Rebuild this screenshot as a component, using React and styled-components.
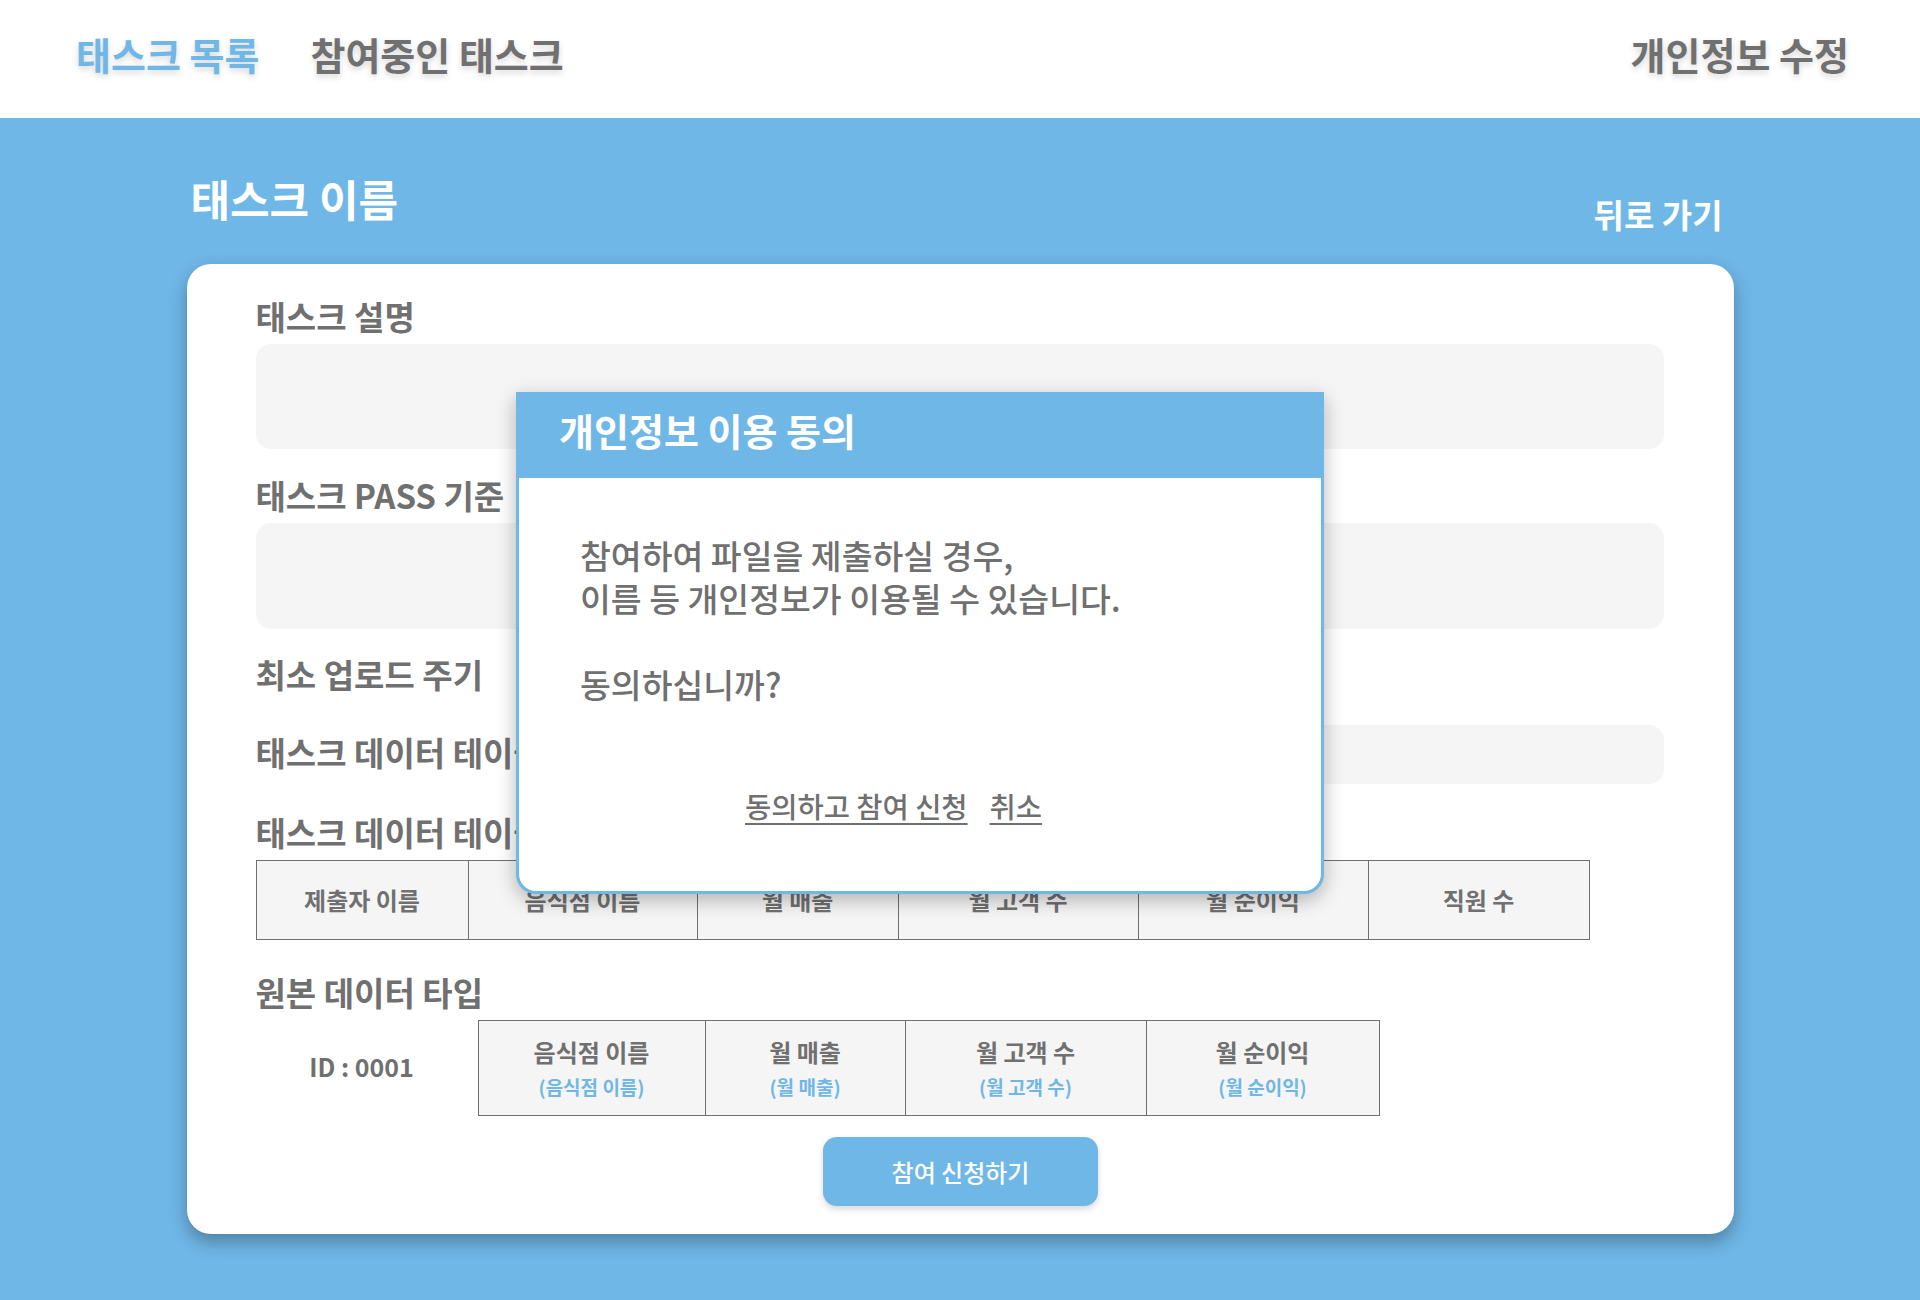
import styled, { createGlobalStyle } from 'styled-components'

const BLUE = '#6fb7e7'
const GREY = '#707070'

const GlobalStyle = createGlobalStyle`
  html, body {
    margin: 0;
    padding: 0;
    background: ${BLUE};
    font-family: 'Noto Sans CJK KR', 'Noto Sans', sans-serif;
    color: ${GREY};
  }
  * {
    box-sizing: border-box;
  }
`

const sourceColumns = [
  { name: '음식점 이름', width: 227 },
  { name: '월 매출', width: 200 },
  { name: '월 고객 수', width: 241 },
  { name: '월 순이익', width: 233 },
]

const dataColumns = [
  { name: '제출자 이름', width: 212 },
  { name: '음식점 이름', width: 229 },
  { name: '월 매출', width: 201 },
  { name: '월 고객 수', width: 240 },
  { name: '월 순이익', width: 230 },
  { name: '직원 수', width: 221 },
]

const sum = (cols) => cols.reduce((acc, col) => acc + col.width, 0)

const App = () => {
  return (
    <Page>
      <GlobalStyle />
      <Header>
        <Nav>
          <NavItem active>태스크 목록</NavItem>
          <NavItem>참여중인 태스크</NavItem>
        </Nav>
        <NavItem>개인정보 수정</NavItem>
      </Header>

      <Main>
        <TitleRow>
          <Title>태스크 이름</Title>
          <Back>뒤로 가기</Back>
        </TitleRow>

        <Card>
          <Label>태스크 설명</Label>
          <Field height={105} />

          <Label gap={26}>태스크 PASS 기준</Label>
          <Field height={106} />

          <Label gap={25}>최소 업로드 주기</Label>

          <FieldRow>
            <RowLabel>태스크 데이터 테이블 이름</RowLabel>
            <Field height={59} grow />
          </FieldRow>

          <Label gap={28}>태스크 데이터 테이블 형식</Label>
          <Table width={sum(dataColumns)}>
            <colgroup>
              {dataColumns.map((col) => (
                <col key={col.name} style={{ width: col.width }} />
              ))}
            </colgroup>
            <tbody>
              <tr>
                {dataColumns.map((col) => (
                  <Cell key={col.name} height={79}>
                    {col.name}
                  </Cell>
                ))}
              </tr>
            </tbody>
          </Table>

          <Label gap={32}>원본 데이터 타입</Label>
          <SourceRow>
            <IdLabel>ID : 0001</IdLabel>
            <Table width={sum(sourceColumns)}>
              <colgroup>
                {sourceColumns.map((col) => (
                  <col key={col.name} style={{ width: col.width }} />
                ))}
              </colgroup>
              <tbody>
                <tr>
                  {sourceColumns.map((col) => (
                    <Cell key={col.name} height={95}>
                      {col.name}
                      <Sub>({col.name})</Sub>
                    </Cell>
                  ))}
                </tr>
              </tbody>
            </Table>
          </SourceRow>

          <ButtonRow>
            <JoinButton>참여 신청하기</JoinButton>
          </ButtonRow>
        </Card>
      </Main>

      <Modal>
        <ModalHeader>개인정보 이용 동의</ModalHeader>
        <ModalBody>
          <ModalText>
            참여하여 파일을 제출하실 경우,
            <br />
            이름 등 개인정보가 이용될 수 있습니다.
            <br />
            <br />
            동의하십니까?
          </ModalText>
          <ModalActions>
            <TextLink>동의하고 참여 신청</TextLink>
            <TextLink>취소</TextLink>
          </ModalActions>
        </ModalBody>
      </Modal>
    </Page>
  )
}

const Page = styled.div`
  position: relative;
  min-height: 1300px;
  background: ${BLUE};
`

const Header = styled.header`
  height: 118px;
  background: #ffffff;
  display: flex;
  align-items: center;
  justify-content: space-between;
  padding: 0 71px 10px 76px;
`

const Nav = styled.nav`
  display: flex;
  gap: 51px;
`

const NavItem = styled.a`
  font-size: 38px;
  font-weight: 700;
  line-height: 1.2;
  color: ${(p) => (p.active ? BLUE : GREY)};
  text-shadow: 0 3px 6px rgba(0, 0, 0, 0.16);
  cursor: pointer;
`

const Main = styled.main`
  width: 1547px;
  margin: 0 auto;
  padding-bottom: 69px;
`

const TitleRow = styled.div`
  height: 146px;
  display: flex;
  justify-content: space-between;
  align-items: flex-start;
  padding: 0 11px 0 4px;
`

const Title = styled.h1`
  margin: 55px 0 0;
  font-size: 43px;
  font-weight: 700;
  line-height: 50px;
  color: #ffffff;
`

const Back = styled.a`
  margin-top: 76px;
  font-size: 33px;
  font-weight: 700;
  line-height: 40px;
  color: #ffffff;
  cursor: pointer;
`

const Card = styled.section`
  background: #ffffff;
  border-radius: 24px;
  box-shadow: 0 8px 18px rgba(0, 0, 0, 0.3);
  padding: 32px 70px 28px 69px;
  display: flex;
  flex-direction: column;
  align-items: stretch;
`

const Label = styled.h2`
  margin: ${(p) => p.gap || 0}px 0 8px;
  font-size: 33px;
  font-weight: 700;
  line-height: 40px;
  color: ${GREY};
  white-space: nowrap;
`

const Field = styled.div`
  height: ${(p) => p.height}px;
  flex: ${(p) => (p.grow ? 1 : 'none')};
  background: #f5f5f5;
  border-radius: 15px;
`

const FieldRow = styled.div`
  display: flex;
  align-items: center;
  margin-top: 23px;
`

const RowLabel = styled.span`
  width: 420px;
  padding-bottom: 6px;
  font-size: 33px;
  font-weight: 700;
  line-height: 40px;
  white-space: nowrap;
`

const Table = styled.table`
  width: ${(p) => p.width}px;
  align-self: flex-start;
  border-collapse: collapse;
  table-layout: fixed;
  background: #f5f5f5;
`

const Cell = styled.td`
  height: ${(p) => p.height}px;
  padding: 0;
  border: 1px solid ${GREY};
  text-align: center;
  vertical-align: middle;
  font-size: 24px;
  font-weight: 700;
  line-height: 30px;
  color: ${GREY};
`

const Sub = styled.span`
  display: block;
  margin-top: 8px;
  font-size: 19px;
  line-height: 24px;
  color: ${BLUE};
`

const SourceRow = styled.div`
  display: flex;
  align-items: center;
`

const IdLabel = styled.span`
  width: 222px;
  padding: 0 10px 4px 0;
  text-align: center;
  font-size: 25px;
  font-weight: 700;
  line-height: 30px;
`

const ButtonRow = styled.div`
  display: flex;
  justify-content: center;
  margin-top: 21px;
  padding-left: 2px;
`

const JoinButton = styled.button`
  width: 275px;
  height: 69px;
  border: none;
  border-radius: 14px;
  background: ${BLUE};
  box-shadow: 0 3px 6px rgba(0, 0, 0, 0.16);
  font-family: inherit;
  font-size: 24px;
  font-weight: 500;
  color: #ffffff;
  cursor: pointer;
`

const Modal = styled.div`
  position: absolute;
  top: 392px;
  left: 516px;
  width: 808px;
  height: 502px;
  background: #ffffff;
  border: 3px solid ${BLUE};
  border-top: none;
  border-radius: 0 0 20px 20px;
  box-shadow: 0 6px 20px rgba(0, 0, 0, 0.28);
  display: flex;
  flex-direction: column;
`

const ModalHeader = styled.div`
  height: 86px;
  margin: 0 -3px;
  padding: 0 0 11px 43px;
  display: flex;
  align-items: center;
  background: ${BLUE};
  font-size: 38px;
  font-weight: 700;
  color: #ffffff;
`

const ModalBody = styled.div`
  padding: 55px 0 0 61px;
`

const ModalText = styled.p`
  margin: 0;
  font-size: 33.5px;
  font-weight: 500;
  line-height: 43px;
  color: ${GREY};
`

const ModalActions = styled.div`
  display: flex;
  gap: 22px;
  margin-top: 83px;
  padding-left: 165px;
`

const TextLink = styled.a`
  font-size: 28.5px;
  font-weight: 500;
  line-height: 36px;
  color: ${GREY};
  text-decoration: underline;
  text-underline-offset: 5px;
  cursor: pointer;
`

export default App
